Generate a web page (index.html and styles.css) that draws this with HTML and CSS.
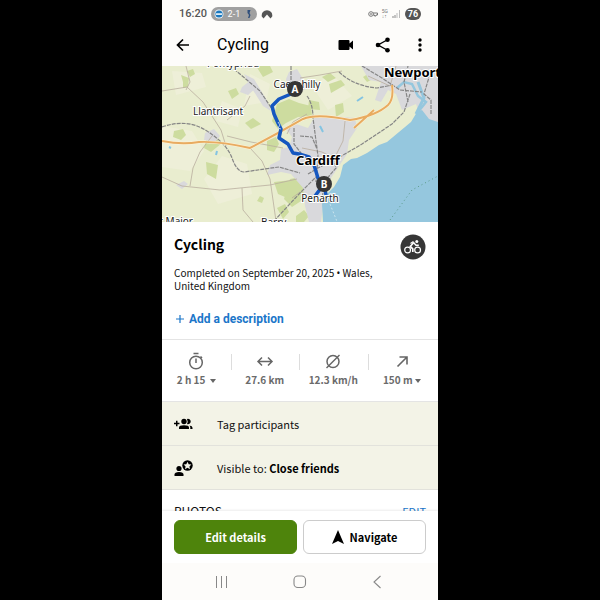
FILE: index.html
```html
<!DOCTYPE html>
<html lang="en">
<head>
    <meta charset="UTF-8">
    <meta name="viewport" content="width=device-width, initial-scale=1.0">
    <title>Cycling</title>
    <link rel="stylesheet" href="styles.css">
</head>
<body>
    <div class="phone">
        <div class="status-bar">
            <span class="clock">16:20</span>
            <span class="score">
                <svg width="10" height="10" viewBox="0 0 10 10"><circle cx="5" cy="5" r="4.500" fill="#e8f1f8"/><circle cx="5" cy="5" r="3.600" fill="#1c78bd"/><path d="M2 4.200h6v1.800H2z" fill="#dcebf5"/></svg>
                <span>2-1</span>
                <svg width="10" height="10" viewBox="0 0 10 10"><path d="M3.500 1h3L5.500 4l1 2-1 3H4L5 6 3.500 4z" fill="#31507c"/></svg>
            </span>
            <svg width="12" height="10" viewBox="0 0 12 10"><path d="M.8 7.500A5.300 5.300 0 1 1 11.200 7.500L9.500 9.500 6 5.500 2.500 9.500z" fill="#555"/></svg>
            <span class="status-icons">
                <svg width="10" height="8" viewBox="0 0 10 8" fill="none" stroke="#777"><circle cx="3" cy="4" r="2.300"/><circle cx="3" cy="4" r=".5"/><path d="M5 3h4.500v2H8v1H6.500V5H5"/></svg>
                <span class="network"><span>5G</span><span>↓↑</span></span>
                <svg width="9" height="8" viewBox="0 0 9 8"><path d="M1 6v2M3 5v3" stroke="#888"/><path d="M5 3v5M7.500 0v8" stroke="#bbb"/></svg>
                <span class="battery">76</span>
            </span>
        </div>

        <header class="app-bar">
            <button class="icon-btn" aria-label="Back">
                <svg width="14" height="14" viewBox="0 0 14 14" fill="none" stroke="#000" stroke-width="1.700"><path d="M13 7H2M7 1.500L1.500 7 7 12.500"/></svg>
            </button>
            <h1>Cycling</h1>
            <button class="icon-btn" aria-label="Video">
                <svg width="16" height="12" viewBox="0 0 16 12"><path d="M1.500 1h9q1 0 1 1v2.500L15 1.500v9L11.500 7.500V10q0 1-1 1h-9q-1 0-1-1V2q0-1 1-1z"/></svg>
            </button>
            <button class="icon-btn" aria-label="Share">
                <svg width="16" height="16" viewBox="0 0 16 16"><path d="M13 2.500L3 8l10 5.500" fill="none" stroke="#000" stroke-width="1.400"/><circle cx="12.500" cy="2.800" r="2.300"/><circle cx="3" cy="8" r="2.300"/><circle cx="12.500" cy="13.200" r="2.300"/></svg>
            </button>
            <button class="icon-btn" aria-label="More">
                <svg width="4" height="14" viewBox="0 0 4 14"><circle cx="2" cy="2" r="1.700"/><circle cx="2" cy="7" r="1.700"/><circle cx="2" cy="12" r="1.700"/></svg>
            </button>
        </header>

        <main class="content">
            <svg class="map" viewBox="0 0 276 156" preserveAspectRatio="xMidYMid slice" role="img" aria-label="Route map">
                <rect width="276" height="156" fill="#e9edcf"/>
                <!-- pale fields -->
                <g fill="#eeefd8">
                    <path d="M0 60l30 5 12 20-14 20-28-4zM60 90l25 8 5 30-34 10-14-25zM88 8l20 10-4 18-22 4zM10 5l30 2 4 14-30 8z"/>
                    <path d="M150 20l20-12 20 22-24 14zM60 35l20 8-4 18-22-6z"/>
                </g>
                <!-- woodland -->
                <g fill="#cddc9f">
                    <path d="M19 9l8 3-1 9-5 1v-6zM25 5l6-2 2 5-5 3zM12 65l9-2 3 6-5 5-8-3zM44 74l9-2 7 5-11 9-7-4zM44 96l12 3-2 14-9-5zM105 75l9-4 3 7-5 8-7-2zM112 116l18-2 8 8-8 12-14-6zM83 57l8-5 8 6-10 5zM66 25l8-3 3 6-7 5zM94 0l14 0 3 6-10 5zM115 38l12-5 10 4 12 3 1 10-14 1-12 6-8 6-6-8zM115 142l8-4 4 8-6 7zM98 130l4 2-2 5-5-2z"/>
                    <path d="M167 18l12-4 4 5-14 8zM147 34l10 2 1 8-12-1zM173 39l8-2 1 9-8 5zM160 11l8-4 6 5-8 4zM201 11l8-5 4 6-8 4zM128 113l10-2 6 10-2 12-12 8-8-8zM134 150l8-6 5 6-5 6h-8z"/>
                </g>
                <!-- towns -->
                <g fill="#d9d9dc">
                    <path d="M43 67l9-4 6 7-5 6-11-2zM14 119l8-4 4 3-6 5zM80 21l9-7 5 8-8 7-8-3zM82 8l10 5 12 20 5 12-8-5-14-22zM127 6l8-3 6 10 3 10-8 4-9-2-3-12z"/>
                    <path d="M108 99l10-5 1-11 8-2 3-10-6-8 10-5 12 4 6-10 17-2 24 2 2 10-8 12-2 14-12 18-4 6-6 14-4 30h-12l-4-16-2-18-12-14-10-2-14 3z"/>
                    <path d="M199 0h77v57l-10-1-8-6-4-12-14 6-6-16-8-4-7 12-6-2 6-18-12-2z"/>
                </g>
                <!-- sea -->
                <path d="M161 156l-1-18 4-9 8-8 6-10 3-12 8-6 6-1 10-5 12-8 8-3 12-10 12-10 6-10 5-2 7 9 9 3v100z" fill="#95c7de"/>
                <path d="M235 22l7-6 8 2 6 12 8 6-8 10" fill="none" stroke="#95c7de" stroke-width="2.500"/>
                <path d="M256 16l6 16-8 16" fill="none" stroke="#95c7de" stroke-width="3"/>
                <path d="M158 60l3 6M195 35l6-4M7 81l2 1M55 85l-1 4" stroke="#84c4e2" stroke-width="2"/>
                <g fill="none" stroke="#b9ad9e" stroke-width=".8">
                    <path d="M0 25l25-4 16 15 18 28 5 16M50 70l-12 16-7 16-3 18M0 111l20 9 38 4 50-5 27-6M88 82l12 13 8 18 6 42M80 122l1 22 10 12M65 70l24 6 32 6M88 30l-5 10-18 14M138 12l20-3 22-4M183 55l-2 20-8 16-14 8M206 10l22 10 6-20M24 0l4 16-4 8M145 48l-14 8-6 12M140 82l20 4 12 6M130 132l8-6 10 8"/>
                </g>
                <g fill="none" stroke="#858585" stroke-width="1.200" stroke-dasharray="4 1">
                    <path d="M0 61q25-9 45 4t25 27 12 14q20-3 35-5l21 6M72 3l26 22 12 18M145 30q6 8 6 22l5 38-2 26M146 108l10-6 20-10 24-14 30-20 12-12 6-18M177 6q15 14 38 16l16-3M200 0l20 12 18 12 22 2M129 0v18M132 62v16l14 18M138 70l12 1 5 12M112 155l26-28 16-16M160 136l2-20 12-14-4-14M246 36l-4-20 4-16M268 8l-6 20 7 6v14"/>
                </g>
                <path d="M0 75q20 4 37 1 20-1 51 6l28-15 25-14q14-6 47 1 26-4 38-15 6-6 4-20M192 62l20-18" fill="none" stroke="#fff3d8" stroke-width="3"/>
                <path d="M0 75q20 4 37 1 20-1 51 6l28-15 25-14q14-6 47 1 26-4 38-15 6-6 4-20M192 62l20-18" fill="none" stroke="#e8ab60" stroke-width="2"/>
                <path d="M228 154l22-30 26-14" fill="none" stroke="#5b9a88" stroke-dasharray="1 3"/>
                <path d="M168 138l8 20" fill="none" stroke="#cbe4ee" stroke-dasharray="2 2"/>
                <path d="M133 23l-4 5-12 5-7 7 2 8 4 9 3 6-2 9 9 6 5 9 6 1 10 3 5 8 4 13 6 6-9 12M162 118l2 11" fill="none" stroke="#1557c0" stroke-width="3.500" stroke-linejoin="round"/>
                <path d="M116 56l2 3-2 3 3 1" fill="none" stroke="#dbe7f5" stroke-width=".8"/>
                <g class="map-labels">
                    <text x="71" y="1" text-anchor="middle">Pontypridd</text>
                    <text x="56" y="49" text-anchor="middle">Llantrisant</text>
                    <text x="135" y="22" text-anchor="middle">Caerphilly</text>
                    <text x="158" y="136" text-anchor="middle">Penarth</text>
                    <text x="31" y="159" text-anchor="end">Llantwit Major</text>
                    <text x="99" y="160">Barry</text>
                    <text class="city" x="156" y="99" text-anchor="middle">Cardiff</text>
                    <text class="city" x="222" y="11">Newport</text>
                </g>
                <g class="map-pin">
                    <circle cx="133" cy="23" r="8"/><text x="133" y="27">A</text>
                    <circle cx="162" cy="118" r="8"/><text x="162" y="122">B</text>
                </g>
            </svg>

            <section class="summary">
                <div class="summary-head">
                    <h2>Cycling</h2>
                    <svg width="26" height="26" viewBox="0 0 26 26"><circle cx="13" cy="13" r="12.500" fill="#363636"/><g fill="none" stroke="#fff"><circle cx="7.600" cy="16" r="2.900" stroke-width="1.200"/><circle cx="17.600" cy="16" r="2.900" stroke-width="1.200"/><path d="M12.800 18v-3.200l-2.600-2.300 3.600-4" stroke-width="1.700" stroke-linejoin="round"/><path d="M13.500 8.500l2.500 2.700h2.800M10.500 9.500l3-2" stroke-width="1.400"/></g><circle cx="16.800" cy="7.500" r="1.500" fill="#fff"/></svg>
                </div>
                <p>Completed on September 20, 2025 <span class="dot">•</span> Wales, United Kingdom</p>
                <a class="add-link" href="#"><svg width="8" height="8" viewBox="0 0 8 8"><path d="M4 0v8M0 4h8" stroke="#1b76c9" stroke-width="1.200"/></svg>Add a description</a>
            </section>

            <section class="stats">
                <button class="stat">
                    <svg width="18" height="18" viewBox="0 0 18 18" fill="none" stroke="#666" stroke-width="1.500"><circle cx="9" cy="10.500" r="6.300"/><path d="M6.500 1.500h5M9 6.500V11M13.500 4.500l1.500 1.500"/></svg>
                    <span>2 h 15 <i class="caret"></i></span>
                </button>
                <div class="stat">
                    <svg width="18" height="18" viewBox="0 0 18 18" fill="none" stroke="#666" stroke-width="1.500"><path d="M2.500 9.500h13M6 5.500l-4 4 4 4M12 5.500l4 4-4 4"/></svg>
                    <span>27.6 km</span>
                </div>
                <div class="stat">
                    <svg width="18" height="18" viewBox="0 0 18 18" fill="none" stroke="#666" stroke-width="1.500"><circle cx="9" cy="9.500" r="6"/><path d="M2.500 16L15.500 3"/></svg>
                    <span>12.3 km/h</span>
                </div>
                <button class="stat">
                    <svg width="18" height="18" viewBox="0 0 18 18" fill="none" stroke="#666" stroke-width="1.600"><path d="M4.500 14.500l9-9M6.500 5h7.500v7.500"/></svg>
                    <span>150 m<i class="caret"></i></span>
                </button>
            </section>

            <button class="row">
                <svg width="19" height="18" viewBox="0 0 19 18"><path d="M0 8.500h5.500M2.750 5.700v5.600" stroke="#000" stroke-width="1.500"/><circle cx="10" cy="6.500" r="2.700"/><path d="M5 14v-1.500q0-2.200 5-2.200t5 2.200V14zM13 4a2.700 2.700 0 1 1 0 5q1.200-2.500 0-5zM15.500 10.600q3 .5 3 2.200V14H16.300q.4-2-.8-3.400z"/></svg>
                <span>Tag participants</span>
            </button>
            <button class="row">
                <svg width="19" height="18" viewBox="0 0 19 18"><circle cx="5" cy="9.500" r="2.600"/><path d="M.5 17v-1.500Q.5 13 5 13t4.500 2.500V17z"/><circle cx="13.500" cy="6.500" r="5.200"/><path d="M13.500 2.700l1.200 2.500 2.700.3-2 1.900.6 2.800-2.500-1.400-2.500 1.400.6-2.800-2-1.900 2.700-.3z" fill="#f3f3e7"/></svg>
                <span>Visible to: <strong>Close friends</strong></span>
            </button>

            <section class="photos">
                <h3>PHOTOS</h3>
                <a href="#">EDIT</a>
            </section>
        </main>

        <footer class="actions">
            <button class="btn primary">Edit details</button>
            <button class="btn">
                <svg width="12" height="14" viewBox="0 0 12 14"><path d="M6 0l6 14-6-3-6 3z"/></svg>
                Navigate
            </button>
        </footer>

        <nav class="system-nav">
            <button class="icon-btn" aria-label="Recent apps"><svg width="14" height="14" viewBox="0 0 14 14"><path d="M1.500 1v12M6.500 1v12M11.500 1v12" stroke="#888"/></svg></button>
            <button class="icon-btn" aria-label="Home"><svg width="14" height="14" viewBox="0 0 14 14"><rect x="1" y="1" width="11.500" height="11.500" rx="3.800" fill="none" stroke="#888" stroke-width="1.100"/></svg></button>
            <button class="icon-btn" aria-label="Back"><svg width="14" height="14" viewBox="0 0 14 14"><path d="M9.500 1L3 7l6.500 6" fill="none" stroke="#888" stroke-width="1.100"/></svg></button>
        </nav>
    </div>
</body>
</html>
```

FILE: styles.css
```css
* { box-sizing: border-box; }
body { margin: 0; background-color: #000; color: #111; font-family: "Noto Sans CJK SC", "Noto Sans", sans-serif; font-size: 11px; line-height: 14px; }
h1, h2, h3, p { margin: 0; }
svg { flex: none; display: block; }
a { color: #1b76c9; text-decoration: none; }
button { margin: 0; padding: 0; border: none; background: none; font: inherit; color: inherit; cursor: pointer; }

.phone { display: flex; flex-direction: column; width: 46%; min-width: 276px; height: 100vh; margin: 0 auto; background-color: #fff; overflow: hidden; }

.status-bar { display: flex; align-items: center; gap: 4px; flex: none; height: 28px; padding: 0 17px; background-color: #fdfcfa; font-family: Roboto, sans-serif; }
.clock { color: #555; font-size: 11px; font-weight: 500; }
.score { display: flex; align-items: center; justify-content: center; gap: 4px; width: 46px; height: 14px; border-radius: 7px; background-color: #a0a0a0; color: #fff; font-size: 9px; }
.status-icons { display: flex; align-items: center; gap: 4px; margin-left: auto; }
.network { display: flex; flex-direction: column; color: #777; font-size: 5px; line-height: 5px; }
.battery { width: 16px; height: 12px; border-radius: 6px; background-color: #555; color: #fff; font-size: 9px; font-weight: 700; line-height: 12px; text-align: center; }

.app-bar { display: flex; align-items: center; flex: none; height: 38px; padding: 0 5px 4px 8px; background-color: #fdfcfa; }
.app-bar h1 { flex: 1; margin-left: 21px; color: #000; font-family: Roboto, sans-serif; font-size: 16px; font-weight: 400; line-height: 20px; }
.icon-btn { display: flex; align-items: center; justify-content: center; width: 26px; height: 26px; }
.app-bar .icon-btn + .icon-btn { margin-left: 11px; }

.content { flex: 1; min-height: 0; overflow: hidden; }
.map { width: 100%; height: 156px; }
.map-labels { font-family: "Noto Sans", sans-serif; font-size: 10px; fill: #222; stroke: #fff; stroke-width: 2px; paint-order: stroke; }
.map-labels .city { font-size: 13px; font-weight: 700; fill: #000; }
.map-pin { fill: #363636; }
.map-pin text { fill: #fff; font-family: "Noto Sans", sans-serif; font-size: 10px; font-weight: 700; text-anchor: middle; }

.summary { padding: 12px 12px 11px; border-bottom: 1px solid #e4e4e4; }
.summary-head { display: flex; justify-content: space-between; }
.summary h2 { font-size: 14px; line-height: 20px; color: #000; }
.summary p { max-width: 210px; margin-top: 6px; font-size: 10px; line-height: 13px; }
.dot { font-family: "Noto Sans", sans-serif; line-height: 1; }
.add-link { display: flex; align-items: center; gap: 5px; margin-top: 18px; padding-left: 2px; font-family: Roboto, sans-serif; font-size: 12px; font-weight: 700; line-height: 18px; }

.stats { display: flex; height: 62px; padding: 12px 2px 0 0; border-bottom: 1px solid #e4e4e4; }
.stat { position: relative; display: flex; flex: 1; flex-direction: column; align-items: center; justify-content: flex-start; gap: 3px; color: #6b6b6b; font-size: 10px; font-weight: 700; line-height: 14px; }
.stat + .stat::before { content: ""; position: absolute; left: 0; top: 2px; height: 16px; border-left: 1px solid #ddd; }
.caret { display: inline-block; margin-left: 2px; border: 3px solid transparent; border-top: 4px solid #666; border-bottom: none; vertical-align: 1px; }

.row { display: flex; align-items: center; gap: 24px; width: 100%; height: 44px; padding: 0 12px; border-bottom: 1px solid #e2e2dc; background-color: #f3f3e7; line-height: 16px; text-align: left; }
.row strong { color: #000; }

.photos { display: flex; justify-content: space-between; padding: 14px 12px; }
.photos h3 { font-size: 12px; font-weight: 400; }

.actions { display: flex; gap: 6px; flex: none; padding: 9px 12px; background-color: #fff; box-shadow: 0 -1px 2px rgba(0,0,0,0.08); }
.btn { display: flex; flex: 1; align-items: center; justify-content: center; gap: 6px; height: 34px; border: 1px solid #ccc; border-radius: 6px; color: #000; font-weight: 700; }
.btn.primary { border-color: #4e840c; background-color: #4e840c; color: #fff; }

.system-nav { display: flex; align-items: center; justify-content: space-between; flex: none; height: 37px; padding: 0 47px; background-color: #fdfcfa; }
```
